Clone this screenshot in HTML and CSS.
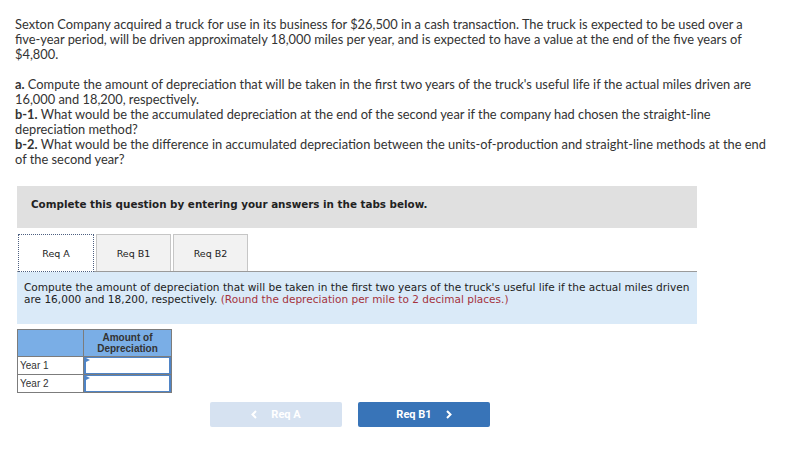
FILE: index.html
```html
<!DOCTYPE html>
<html>
<head>
<meta charset="utf-8">
<link rel="stylesheet" href="styles.css">
</head>
<body>
<div class="page">
  <p class="q">Sexton Company acquired a truck for use in its business for $26,500 in a cash transaction. The truck is expected to be used over a<br>five-year period, will be driven approximately 18,000 miles per year, and is expected to have a value at the end of the five years of<br>$4,800.</p>
  <p class="q q2"><b>a.</b> Compute the amount of depreciation that will be taken in the first two years of the truck's useful life if the actual miles driven are<br>16,000 and 18,200, respectively.<br><b>b-1.</b> What would be the accumulated depreciation at the end of the second year if the company had chosen the straight-line<br>depreciation method?<br><b>b-2.</b> What would be the difference in accumulated depreciation between the units-of-production and straight-line methods at the end<br>of the second year?</p>

  <div class="box">
    <div class="banner">Complete this question by entering your answers in the tabs below.</div>
    <div class="tabs">
      <div class="tab active">Req A</div>
      <div class="tab">Req B1</div>
      <div class="tab">Req B2</div>
    </div>
    <div class="panel">Compute the amount of depreciation that will be taken in the first two years of the truck's useful life if the actual miles driven<br>are 16,000 and 18,200, respectively. <span class="hint">(Round the depreciation per mile to 2 decimal places.)</span></div>
    <table class="grid">
      <tr class="head"><th class="c1"></th><th class="c2">Amount of<br>Depreciation</th></tr>
      <tr><td class="c1">Year 1</td><td class="c2"><div class="inp"></div></td></tr>
      <tr><td class="c1">Year 2</td><td class="c2"><div class="inp"></div></td></tr>
    </table>
    <div class="nav">
      <div class="btn prev"><svg class="chev left" width="6" height="9" viewBox="0 0 6 9"><polyline points="5,1 1.5,4.5 5,8" fill="none" stroke="#ffffff" stroke-width="2"/></svg>Req A</div>
      <div class="btn next">Req B1<svg class="chev right" width="6" height="9" viewBox="0 0 6 9"><polyline points="1,1 4.5,4.5 1,8" fill="none" stroke="#ffffff" stroke-width="2"/></svg></div>
    </div>
  </div>
</div>
</body>
</html>
```

FILE: styles.css
```css
html, body {
  margin: 0;
  padding: 0;
  background: #ffffff;
}
.page {
  padding: 17px 0 0 15px;
  width: 777px;
}
.q {
  margin: 0;
  font-family: Lato, "Liberation Sans", sans-serif;
  font-size: 12.85px;
  line-height: 15px;
  color: #333333;
  white-space: nowrap;
}
.q b {
  font-weight: bold;
}
.q2 {
  margin-top: 15px;
}
.box {
  margin: 19px 0 0 2px;
  width: 680px;
}
.banner {
  box-sizing: border-box;
  height: 42px;
  background: #e0e0e0;
  font-family: "DejaVu Sans", Verdana, sans-serif;
  font-weight: bold;
  font-size: 10.35px;
  line-height: 12px;
  color: #222222;
  padding: 12px 0 0 14px;
}
.tabs {
  display: flex;
  gap: 2px;
  margin-top: 6px;
  height: 37px;
}
.tab {
  box-sizing: border-box;
  width: 75px;
  height: 37px;
  border: 1px solid #c6c6c6;
  border-bottom: none;
  background: #f2f2f2;
  font-family: "DejaVu Sans", Verdana, sans-serif;
  font-size: 9.5px;
  color: #222222;
  display: flex;
  align-items: center;
  justify-content: center;
}
.tab.active {
  width: 76px;
  margin-left: 1px;
  background: #ffffff;
  border: 1px dotted #4d5f80;
  height: 38px;
  position: relative;
  z-index: 1;
}
.panel {
  border-top: 1px solid #9a9a9a;
  background: #daeaf8;
  height: 43px;
  padding: 9px 0 0 7px;
  font-family: "DejaVu Sans", Verdana, sans-serif;
  font-size: 10.55px;
  line-height: 12px;
  color: #222222;
  white-space: nowrap;
}
.hint {
  color: #a5333d;
}
.grid {
  margin-top: 5px;
  border-collapse: collapse;
  font-family: "Liberation Sans", Arial, sans-serif;
  font-size: 10px;
  color: #333333;
}
.grid th, .grid td {
  border: 1px solid #7c7c7c;
  padding: 0;
}
.grid .head th {
  background: #7aaee6;
  height: 26px;
  font-weight: bold;
  font-size: 10px;
  line-height: 11px;
  color: #333333;
}
.grid .c1 {
  width: 65px;
  text-align: left;
}
.grid td.c1 {
  padding-left: 2px;
  width: 63px;
  height: 17px;
}
.grid .c2 {
  width: 87px;
}
.inp {
  box-sizing: border-box;
  height: 17px;
  border: 2px solid #4f84c6;
  border-top-width: 1px;
  border-bottom-width: 1px;
  background: #ffffff;
  position: relative;
}
.inp::before {
  content: "";
  position: absolute;
  left: 0;
  top: 0;
  border-left: 4px solid #4f84c6;
  border-top: 2px solid transparent;
  border-bottom: 2px solid transparent;
}
.nav {
  display: flex;
  gap: 16px;
  margin: 9px 0 0 193px;
}
.btn {
  box-sizing: border-box;
  width: 132px;
  height: 25px;
  border-radius: 2px;
  font-family: Roboto, "Liberation Sans", sans-serif;
  font-weight: bold;
  font-size: 11px;
  color: #ffffff;
  display: flex;
  align-items: center;
  justify-content: center;
}
.btn.prev {
  background: #d6e2f1;
}
.btn.next {
  background: #3874b8;
}
.chev {
  display: block;
}
.chev.left {
  margin-right: 14px;
}
.chev.right {
  margin-left: 14px;
}
```
